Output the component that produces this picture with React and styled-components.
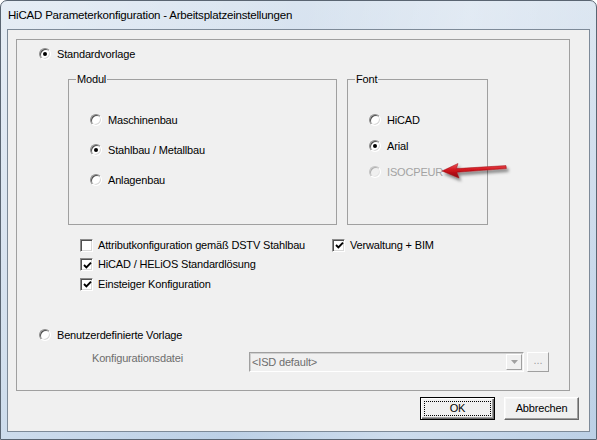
import React from "react";
import styled, { createGlobalStyle } from "styled-components";

const GlobalStyle = createGlobalStyle`
  html, body {
    margin: 0;
    padding: 0;
    background: #ffffff;
  }
  body {
    width: 597px;
    height: 440px;
    overflow: hidden;
    font-family: "Liberation Sans", Arial, sans-serif;
  }
`;

const modules = [
  { label: "Maschinenbau", checked: false },
  { label: "Stahlbau / Metallbau", checked: true },
  { label: "Anlagenbau", checked: false },
];

const fonts = [
  { label: "HiCAD", checked: false },
  { label: "Arial", checked: true },
  { label: "ISOCPEUR", checked: false, disabled: true },
];

const options = [
  { label: "Attributkonfiguration gemäß DSTV Stahlbau", checked: false },
  { label: "Verwaltung + BIM", checked: true },
  { label: "HiCAD / HELiOS Standardlösung", checked: true },
  null,
  { label: "Einsteiger Konfiguration", checked: true },
];

export default function App() {
  return (
    <>
      <GlobalStyle />
      <Window>
        <TitleBar>HiCAD Parameterkonfiguration - Arbeitsplatzeinstellungen</TitleBar>
        <Client>
          <OuterGroup>
            <Radio label="Standardvorlage" checked $top={6} $indent={22} />

            <GroupsRow>
              <Group $width={269}>
                <Caption>Modul</Caption>
                <OptionList $gap={14}>
                  {modules.map((m) => (
                    <Radio key={m.label} label={m.label} checked={m.checked} />
                  ))}
                </OptionList>
              </Group>
              <Group $width={141}>
                <Caption>Font</Caption>
                <OptionList $gap={10}>
                  {fonts.map((f) => (
                    <Radio
                      key={f.label}
                      label={f.label}
                      checked={f.checked}
                      disabled={f.disabled}
                    />
                  ))}
                </OptionList>
              </Group>
            </GroupsRow>

            <CheckGrid>
              {options.map((o, i) =>
                o ? (
                  <CheckItem key={o.label}>
                    <CheckBox $checked={o.checked}>
                      {o.checked && (
                        <svg width="9" height="9" viewBox="0 0 9 9">
                          <path
                            d="M1 4 L3.4 6.4 L8 1.6"
                            fill="none"
                            stroke="#000"
                            strokeWidth="1.9"
                          />
                        </svg>
                      )}
                    </CheckBox>
                    <Label>{o.label}</Label>
                  </CheckItem>
                ) : (
                  <span key={i} />
                )
              )}
            </CheckGrid>

            <Radio label="Benutzerdefinierte Vorlage" $top={35} $indent={22} />

            <FileRow>
              <FieldLabel>Konfigurationsdatei</FieldLabel>
              <Combo>
                <ComboText>&lt;ISD default&gt;</ComboText>
                <DropButton>
                  <svg width="7" height="4" viewBox="0 0 7 4">
                    <path d="M0 0 H7 L3.5 4 Z" fill="#a0a0a0" />
                  </svg>
                </DropButton>
              </Combo>
              <BrowseButton disabled>...</BrowseButton>
            </FileRow>

            <Arrow width="74" height="28" viewBox="0 0 74 28">
              <defs>
                <linearGradient id="arrowFill" x1="0" y1="0" x2="0" y2="1">
                  <stop offset="0" stopColor="#f0555a" />
                  <stop offset="0.45" stopColor="#d0141c" />
                  <stop offset="1" stopColor="#8c0a10" />
                </linearGradient>
                <filter id="arrowShadow" x="-20%" y="-40%" width="150%" height="220%">
                  <feDropShadow dx="2" dy="3" stdDeviation="1.4" floodColor="#000" floodOpacity="0.45" />
                </filter>
              </defs>
              <path
                d="M3 14 L19 6.5 L17.5 11.6 L67 8.6 L67.4 11.6 L17.8 15.2 L20 21 Z"
                fill="url(#arrowFill)"
                stroke="#9a0c12"
                strokeWidth="0.5"
                filter="url(#arrowShadow)"
              />
            </Arrow>
          </OuterGroup>

          <ButtonRow>
            <Button $default>
              <FocusRect>OK</FocusRect>
            </Button>
            <Button>Abbrechen</Button>
          </ButtonRow>
        </Client>
      </Window>
    </>
  );
}

function Radio({ label, checked, disabled, $top, $indent }) {
  return (
    <OptionItem $top={$top} $indent={$indent}>
      <RadioCircle $checked={checked} $disabled={disabled} />
      <Label $disabled={disabled}>{label}</Label>
    </OptionItem>
  );
}

const Window = styled.div`
  box-sizing: border-box;
  width: 597px;
  height: 440px;
  display: flex;
  flex-direction: column;
  border: 1px solid #5a6572;
  border-radius: 7px 7px 0 0;
  padding: 0 6px 7px 6px;
  background: linear-gradient(
      100deg,
      rgba(255, 255, 255, 0.35) 0%,
      rgba(255, 255, 255, 0) 45%,
      rgba(255, 255, 255, 0.25) 70%,
      rgba(255, 255, 255, 0) 100%
    ),
    linear-gradient(180deg, #d9e4f0 0%, #c8d8ea 60%, #bcd0e6 100%);
`;

const TitleBar = styled.div`
  height: 28px;
  display: flex;
  align-items: center;
  padding-left: 1px;
  font-family: "Liberation Sans", Arial, sans-serif;
  font-size: 11.5px;
  letter-spacing: -0.2px;
  color: #000;
  white-space: nowrap;
`;

const Client = styled.div`
  flex: 1;
  display: flex;
  flex-direction: column;
  border: 1px solid #7d8a98;
  background: #f0f0f0;
`;

const OuterGroup = styled.div`
  position: relative;
  box-sizing: border-box;
  width: 554px;
  height: 352px;
  margin: 9px 0 0 8px;
  border: 1px solid #a0a0a0;
  display: flex;
  flex-direction: column;
  align-items: flex-start;
`;

const OptionItem = styled.div`
  height: 16px;
  display: flex;
  align-items: center;
  gap: 6px;
  margin-top: ${(p) => p.$top || 0}px;
  padding-left: ${(p) => p.$indent || 0}px;
`;

const RadioCircle = styled.span`
  box-sizing: border-box;
  flex: none;
  width: 12px;
  height: 12px;
  border-radius: 50%;
  border: 1px solid;
  border-color: ${(p) =>
    p.$disabled ? "#c4c4c4 #fff #fff #c4c4c4" : "#8c8c8c #fff #fff #8c8c8c"};
  box-shadow: ${(p) =>
    p.$disabled
      ? "inset 1px 1px 0 #b0b0b0, inset -1px -1px 0 #e6e6e6"
      : "inset 1px 1px 0 #505050, inset -1px -1px 0 #d8d8d8"};
  background: ${(p) => (p.$disabled ? "#f0f0f0" : "#ffffff")};
  display: flex;
  align-items: center;
  justify-content: center;

  &::after {
    content: "";
    display: ${(p) => (p.$checked ? "block" : "none")};
    width: 4px;
    height: 4px;
    border-radius: 50%;
    background: #000;
  }
`;

const Label = styled.span`
  font-family: "Liberation Sans", Arial, sans-serif;
  font-size: 11px;
  letter-spacing: -0.17px;
  line-height: 13px;
  color: ${(p) => (p.$disabled ? "#a3a3a3" : "#000")};
  white-space: nowrap;
`;

const GroupsRow = styled.div`
  display: flex;
  gap: 10px;
  margin-top: 17px;
  padding-left: 51px;
`;

const Group = styled.div`
  position: relative;
  box-sizing: border-box;
  width: ${(p) => p.$width}px;
  height: 146px;
  border: 1px solid #a0a0a0;
  padding: 32px 0 0 21px;
`;

const Caption = styled.span`
  position: absolute;
  top: -7px;
  left: 7px;
  padding: 0 1px;
  background: #f0f0f0;
  font-size: 11px;
  letter-spacing: -0.17px;
  line-height: 13px;
  color: #000;
`;

const OptionList = styled.div`
  display: flex;
  flex-direction: column;
  gap: ${(p) => p.$gap}px;
`;

const CheckGrid = styled.div`
  display: grid;
  grid-template-columns: 252px auto;
  grid-auto-rows: 16px;
  row-gap: 3.5px;
  margin: 12px 0 0 63px;
`;

const CheckItem = styled.div`
  display: flex;
  align-items: center;
  gap: 5px;
`;

const CheckBox = styled.span`
  box-sizing: border-box;
  flex: none;
  width: 13px;
  height: 13px;
  border: 1px solid;
  border-color: #8c8c8c #fff #fff #8c8c8c;
  box-shadow: inset 1px 1px 0 #505050, inset -1px -1px 0 #d8d8d8;
  background: #fff;
  display: flex;
  align-items: center;
  justify-content: center;
  padding: 1px 0 0 1px;
`;

const FileRow = styled.div`
  display: flex;
  align-items: flex-start;
  margin-top: 9px;
  padding-left: 75px;
`;

const FieldLabel = styled.span`
  width: 157px;
  font-size: 11px;
  letter-spacing: -0.17px;
  line-height: 13px;
  color: #6d6d6d;
`;

const Combo = styled.div`
  box-sizing: border-box;
  width: 275px;
  height: 20px;
  display: flex;
  align-items: stretch;
  border: 1px solid;
  border-color: #a0a0a0 #fff #fff #a0a0a0;
  box-shadow: inset 1px 1px 0 #d0d0d0;
  background: #f0f0f0;
  padding: 1px;
`;

const ComboText = styled.span`
  flex: 1;
  padding: 2px 0 0 1px;
  font-size: 11px;
  letter-spacing: -0.17px;
  line-height: 13px;
  color: #6d6d6d;
`;

const DropButton = styled.span`
  box-sizing: border-box;
  width: 16px;
  display: flex;
  align-items: center;
  justify-content: center;
  border: 1px solid;
  border-color: #fff #a0a0a0 #a0a0a0 #fff;
  background: #f0f0f0;
`;

const BrowseButton = styled.button`
  box-sizing: border-box;
  width: 22px;
  height: 20px;
  margin-left: 3px;
  padding: 0 0 4px;
  border: 1px solid;
  border-color: #fff #a0a0a0 #a0a0a0 #fff;
  background: #f0f0f0;
  font-family: "Liberation Sans", Arial, sans-serif;
  font-size: 11px;
  line-height: 11px;
  color: #a0a0a0;
`;

const Arrow = styled.svg`
  position: absolute;
  left: 422px;
  top: 117px;
  overflow: visible;
`;

const ButtonRow = styled.div`
  display: flex;
  justify-content: flex-end;
  gap: 9px;
  margin-top: 6px;
  padding-right: 10px;
`;

const Button = styled.button`
  box-sizing: border-box;
  width: 75px;
  height: 23px;
  padding: 0;
  display: flex;
  align-items: center;
  justify-content: center;
  background: #f0f0f0;
  font-family: "Liberation Sans", Arial, sans-serif;
  font-size: 11px;
  letter-spacing: -0.17px;
  line-height: 13px;
  color: #000;
  border: 1px solid;
  border-color: ${(p) => (p.$default ? "#000" : "#fff #696969 #696969 #fff")};
  box-shadow: ${(p) =>
    p.$default
      ? "inset 1px 1px 0 #fff, inset -1px -1px 0 #696969, inset -2px -2px 0 #a0a0a0"
      : "inset -1px -1px 0 #a0a0a0, inset 1px 1px 0 #f8f8f8"};
`;

const FocusRect = styled.span`
  box-sizing: border-box;
  width: 67px;
  height: 15px;
  display: flex;
  align-items: center;
  justify-content: center;
  border: 1px dotted #000;
`;
